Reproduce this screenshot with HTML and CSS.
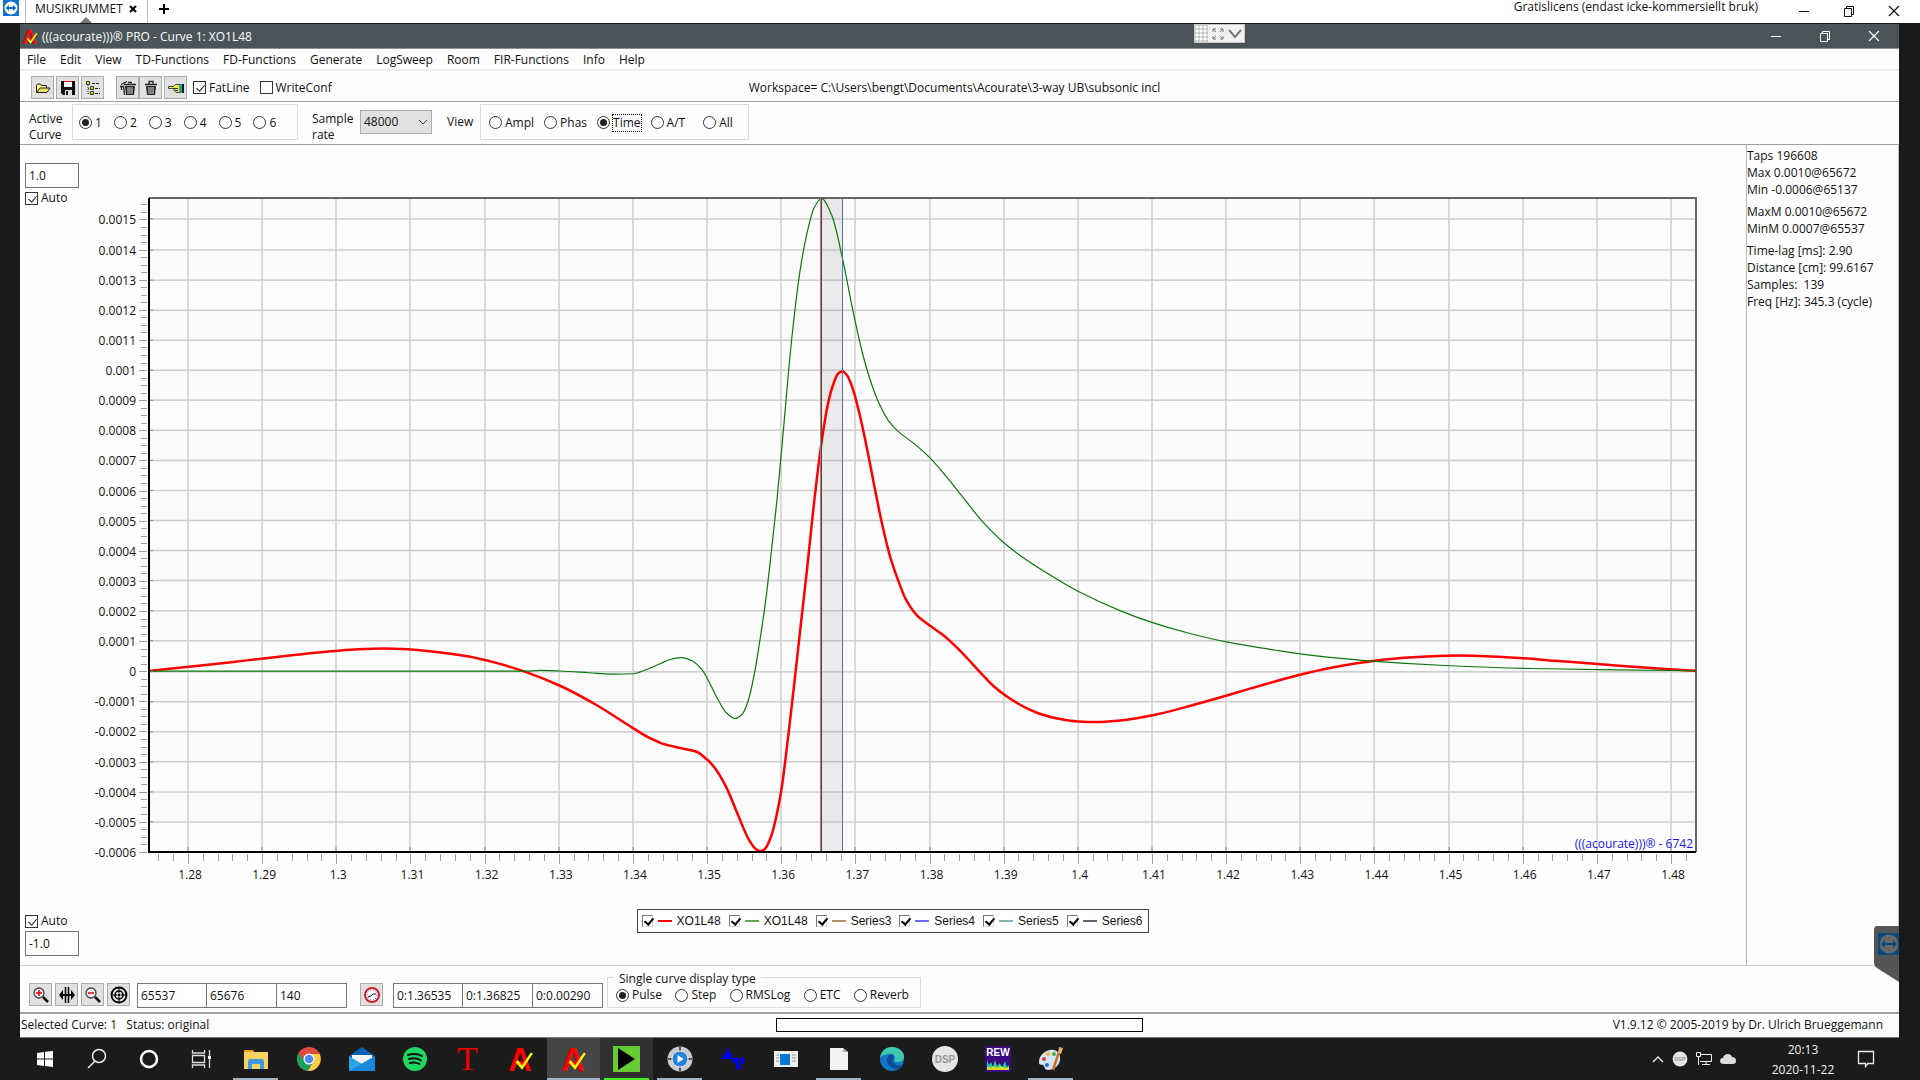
FILE: index.html
```html
<!DOCTYPE html>
<html lang="en">
  <head>
    <meta charset="UTF-8" />
    <title>(((acourate)))® PRO</title>
    <link rel="stylesheet" href="styles.css">
  </head>
  <body>
    <svg class="defs" aria-hidden="true">
      <symbol id="acourate" viewBox="0 0 24 24">
        <text x="11" y="23" text-anchor="middle" class="logo-a">A</text>
        <path d="M9 13l4 5L21 6l2 1L13 22 7 15z" fill="#ff0" />
      </symbol>
      <symbol id="teamviewer" viewBox="0 0 16 16">
        <path fill="#0e74d0" d="M0 0h16v16H0z" />
        <circle cx="8" cy="8" r="6.5" fill="#fff" />
        <path fill="#0e74d0" d="M2.5 8L6 5v2h4V5l3.5 3-3.5 3V9H6v2z" />
      </symbol>
      <symbol id="restore" viewBox="0 0 12 12">
        <path d="M1.500 3.500h7v8h-7zM3.500 3V1.500h7v8H9" fill="none" stroke="currentColor" />
      </symbol>
      <symbol id="close" viewBox="0 0 12 12">
        <path d="M1 1l10 10M11 1L1 11" fill="none" stroke="currentColor" stroke-width="1.2" />
      </symbol>
      <symbol id="minimize" viewBox="0 0 12 12">
        <path d="M1 6.5h10" stroke="currentColor" />
      </symbol>
      <symbol id="dsp" viewBox="0 0 28 28">
        <circle cx="14" cy="14" r="13" fill="#e6e6e6" />
        <text x="14" y="18" text-anchor="middle" class="logo-dsp">DSP</text>
      </symbol>
    </svg>

    <header class="remote-bar">
      <svg class="remote-logo" width="16" height="16"><use href="#teamviewer" /></svg>
      <div class="remote-tab">
        MUSIKRUMMET
        <button class="tab-close" aria-label="Close tab">
          <svg width="8" height="8" viewBox="0 0 8 8"><path d="M1 1l6 6M7 1L1 7" stroke="#000" stroke-width="2" /></svg>
        </button>
      </div>
      <button class="tab-add" aria-label="New tab">
        <svg width="12" height="12" viewBox="0 0 12 12"><path d="M6 1v10M1 6h10" stroke="#000" stroke-width="2" /></svg>
      </button>
      <span class="licence">Gratislicens (endast icke-kommersiellt bruk)</span>
      <div class="remote-controls">
        <button aria-label="Minimize"><svg width="12" height="12"><use href="#minimize" /></svg></button>
        <button aria-label="Restore"><svg width="12" height="12"><use href="#restore" /></svg></button>
        <button aria-label="Close"><svg width="12" height="12"><use href="#close" /></svg></button>
      </div>
    </header>

    <div class="desktop">
      <main class="window">
        <div class="title-bar">
          <svg width="16" height="16"><use href="#acourate" /></svg>
          <h1>(((acourate)))® PRO - Curve 1: XO1L48</h1>
          <div class="window-controls">
            <button aria-label="Minimize"><svg width="12" height="12"><use href="#minimize" /></svg></button>
            <button aria-label="Restore"><svg width="12" height="12"><use href="#restore" /></svg></button>
            <button aria-label="Close"><svg width="12" height="12"><use href="#close" /></svg></button>
          </div>
          <div class="session-handle">
            <span class="grip"></span>
            <svg width="12" height="12" viewBox="0 0 12 12"><path d="M1 4V1h3M8 1h3v3M11 8v3H8M4 11H1V8M1 1l3 3M11 1L8 4M11 11L8 8M1 11l3-3" fill="none" stroke="#777" /></svg>
            <svg width="16" height="12" viewBox="0 0 16 12"><path d="M2 2l6 7 6-7" fill="none" stroke="#777" stroke-width="2" /></svg>
          </div>
        </div>

        <nav class="menu">
          <a href="#">File</a>
          <a href="#">Edit</a>
          <a href="#">View</a>
          <a href="#">TD-Functions</a>
          <a href="#">FD-Functions</a>
          <a href="#">Generate</a>
          <a href="#">LogSweep</a>
          <a href="#">Room</a>
          <a href="#">FIR-Functions</a>
          <a href="#">Info</a>
          <a href="#">Help</a>
        </nav>

        <div class="toolbar">
          <button class="tool" aria-label="Open">
            <svg width="16" height="16" viewBox="0 0 16 16"><path d="M1.500 12V5.500l1-1.500h3l1 1.500h5V8" fill="#f6f08a" stroke="#222" /><path d="M1.500 12.500L5 8h10l-3 4.500z" fill="#e8e060" stroke="#222" /></svg>
          </button>
          <button class="tool" aria-label="Save">
            <svg width="16" height="16" viewBox="0 0 16 16"><path d="M1 1h14v14H3l-2-2z" fill="#111" /><path d="M4 1h8v6H4z" fill="#fff" /><path d="M4 1h8v1H4z" fill="#e00" /><path d="M5 10h7v5H5z" fill="#ddd" /><path d="M6 11h2v4H6z" fill="#111" /></svg>
          </button>
          <button class="tool" aria-label="Tree">
            <svg width="16" height="16" viewBox="0 0 16 16"><path d="M3 3v11M3 8.500h4M3 13.500h4" fill="none" stroke="#333" stroke-dasharray="1 1" /><path d="M7 3.500h7M10 8.500h5M10 13.500h5" stroke="#222" stroke-dasharray="3 1" /><path d="M1.500 1.500h3v3h-3zM5.500 6.500h3v3h-3zM5.500 11.500h3v3h-3z" fill="#e8e000" stroke="#333" /></svg>
          </button>
          <span class="tool-gap"></span>
          <button class="tool joined" aria-label="Clear all">
            <svg width="16" height="16" viewBox="0 0 16 16"><path d="M5 6h10l-1 9H6z" fill="#222" /><path d="M8 7v7M10 7v7M12 7v7" stroke="#ddd" /><path d="M4 4.500h12M8 2.500h4M1 4.500l6-3M1.500 7v3M3.500 6l1 9M0 6.500h4" fill="none" stroke="#222" stroke-width="1.3" /></svg>
          </button>
          <button class="tool" aria-label="Clear">
            <svg width="16" height="16" viewBox="0 0 16 16"><path d="M3 6h10l-1 9H4z" fill="#222" /><path d="M6 7v7M8 7v7M10 7v7" stroke="#ddd" /><path d="M2 4.500h12M6 4V1.500h4V4" fill="none" stroke="#222" stroke-width="1.3" /></svg>
          </button>
          <button class="tool" aria-label="Undo">
            <svg width="16" height="16" viewBox="0 0 16 16"><path d="M.5 6.500h5l2-2H12v8H8l-2-2V8.500H.5z" fill="#ece850" stroke="#444" /><path d="M12 4h2v9h-2z" fill="#0aa" /><path d="M14 4h2v9h-2z" fill="#111" /><path d="M6 8.500h4M7 10.500h3" stroke="#333" /></svg>
          </button>
          <label class="check"><input type="checkbox" checked />FatLine</label>
          <label class="check"><input type="checkbox" />WriteConf</label>
          <span class="workspace">Workspace= C:\Users\bengt\Documents\Acourate\3-way UB\subsonic incl</span>
        </div>

        <div class="options">
          <span class="caption curve-caption">Active Curve</span>
          <div class="group curve-group">
            <label class="radio"><input type="radio" name="curve" checked />1</label>
            <label class="radio"><input type="radio" name="curve" />2</label>
            <label class="radio"><input type="radio" name="curve" />3</label>
            <label class="radio"><input type="radio" name="curve" />4</label>
            <label class="radio"><input type="radio" name="curve" />5</label>
            <label class="radio"><input type="radio" name="curve" />6</label>
          </div>
          <label class="caption rate-caption" for="rate">Sample rate</label>
          <div class="select">
            <select id="rate"><option>48000</option></select>
            <svg width="10" height="6" viewBox="0 0 10 6"><path d="M1 1l4 4 4-4" fill="none" stroke="#444" /></svg>
          </div>
          <span class="view-caption">View</span>
          <div class="group view-group">
            <label class="radio"><input type="radio" name="view" />Ampl</label>
            <label class="radio"><input type="radio" name="view" />Phas</label>
            <label class="radio"><input type="radio" name="view" checked /><span class="focused">Time</span></label>
            <label class="radio"><input type="radio" name="view" />A/T</label>
            <label class="radio all"><input type="radio" name="view" />All</label>
          </div>
        </div>

        <div class="content">
          <section class="chart">
            <div class="limits">
              <div>
                <input class="field" type="text" value="1.0" aria-label="Upper limit" />
                <label class="check"><input type="checkbox" checked />Auto</label>
              </div>
              <div>
                <label class="check"><input type="checkbox" checked />Auto</label>
                <input class="field" type="text" value="-1.0" aria-label="Lower limit" />
              </div>
            </div>
            <div class="y-axis" id="yAxis"></div>
            <div class="plot">
              <svg id="plot" viewBox="149 199 1547 653" preserveAspectRatio="none"></svg>
              <span class="watermark">(((acourate)))® - 6742</span>
            </div>
            <div class="x-axis" id="xAxis"></div>
            <div class="legend">
              <label><input type="checkbox" checked /><i class="line red"></i>XO1L48</label>
              <label><input type="checkbox" checked /><i class="line green"></i>XO1L48</label>
              <label><input type="checkbox" checked /><i class="line brown"></i>Series3</label>
              <label><input type="checkbox" checked /><i class="line blue"></i>Series4</label>
              <label><input type="checkbox" checked /><i class="line teal"></i>Series5</label>
              <label><input type="checkbox" checked /><i class="line dark"></i>Series6</label>
            </div>
          </section>

          <aside class="info">
            <p>Taps 196608<br />Max 0.0010@65672<br />Min -0.0006@65137</p>
            <p>MaxM 0.0010@65672<br />MinM 0.0007@65537</p>
            <p>Time-lag [ms]: 2.90<br />Distance [cm]: 99.6167<br />Samples:&nbsp; 139<br />Freq [Hz]: 345.3 (cycle)</p>
          </aside>
        </div>

        <div class="bottom-bar">
          <button class="tool" aria-label="Zoom in">
            <svg width="18" height="18" viewBox="0 0 18 18"><circle cx="7" cy="7" r="5" fill="#eee" stroke="#444" stroke-width="1.3" /><path d="M11 11l5 5" stroke="#111" stroke-width="2.500" /><path d="M7 4v6M4 7h6" stroke="#e00" stroke-width="1.5" /></svg>
          </button>
          <button class="tool" aria-label="Fit width">
            <svg width="18" height="18" viewBox="0 0 18 18"><path d="M7.500 1v16M10.500 1v16" stroke="#000" stroke-width="1.5" /><path d="M1 9l4-5v10zM17 9l-4-5v10z" /><path d="M5 9h8" stroke="#000" stroke-width="2" /></svg>
          </button>
          <button class="tool" aria-label="Zoom out">
            <svg width="18" height="18" viewBox="0 0 18 18"><circle cx="7" cy="7" r="5" fill="#eee" stroke="#444" stroke-width="1.3" /><path d="M11 11l5 5" stroke="#111" stroke-width="2.500" /><path d="M4 7h6" stroke="#e00" stroke-width="1.5" /></svg>
          </button>
          <button class="tool" aria-label="Centre">
            <svg width="18" height="18" viewBox="0 0 18 18"><g fill="none" stroke="#000"><circle cx="9" cy="9" r="7.5" stroke-width="1.8" /><circle cx="9" cy="9" r="4" stroke-width="1.5" /><path d="M9 2v5M9 11v5M2 9h5M11 9h5" /></g><circle cx="9" cy="9" r="1.5" /></svg>
          </button>
          <div class="fields">
            <input class="field" type="text" value="65537" aria-label="First sample" />
            <input class="field" type="text" value="65676" aria-label="Last sample" />
            <input class="field" type="text" value="140" aria-label="Sample count" />
          </div>
          <button class="tool" aria-label="Time">
            <svg width="18" height="18" viewBox="0 0 18 18"><circle cx="9" cy="9" r="7" fill="#fff" stroke="#c22" stroke-width="2" /><circle cx="9" cy="9" r="5" fill="none" stroke="#44f" stroke-dasharray="1 2" /><path d="M5 11l3-1 2-2h3" fill="none" stroke="#111" /></svg>
          </button>
          <div class="fields">
            <input class="field" type="text" value="0:1.36535" aria-label="Start time" />
            <input class="field" type="text" value="0:1.36825" aria-label="End time" />
            <input class="field" type="text" value="0:0.00290" aria-label="Duration" />
          </div>
          <fieldset class="display-type">
            <legend>Single curve display type</legend>
            <label class="radio"><input type="radio" name="type" checked />Pulse</label>
            <label class="radio"><input type="radio" name="type" />Step</label>
            <label class="radio"><input type="radio" name="type" />RMSLog</label>
            <label class="radio"><input type="radio" name="type" />ETC</label>
            <label class="radio"><input type="radio" name="type" />Reverb</label>
          </fieldset>
        </div>

        <footer class="status">
          <span>Selected Curve: 1&nbsp;&nbsp; Status: original</span>
          <div class="progress"></div>
          <span class="version">V1.9.12 © 2005-2019 by Dr. Ulrich Brueggemann</span>
        </footer>

        <svg class="side-flap" width="25" height="56" viewBox="0 0 25 56">
          <path d="M3 0h22v56L3 42q-3-2-3-5V4q0-4 3-4z" fill="#555" />
          <path d="M4 7h21v22H4z" fill="#07497f" />
          <circle cx="15" cy="18" r="9.5" fill="#666" />
          <path d="M7 18l4-4v3h8v-3l4 4-4 4v-3h-8v3z" fill="#07497f" />
        </svg>
      </main>
    </div>

    <div class="taskbar">
      <div class="system">
        <button aria-label="Start"><svg width="16" height="18" viewBox="0 0 16 18"><path fill="#fff" d="M0 3l7-1v6.500H0zM8 1.800L16 1v7.500H8zM0 9.500h7V16l-7-1zM8 9.500h8V17l-8-1z" /></svg></button>
        <button aria-label="Search"><svg width="22" height="22" viewBox="0 0 22 22"><circle cx="13" cy="8" r="6.5" fill="none" stroke="#eee" stroke-width="1.5" /><path d="M9 13l-7 7" stroke="#eee" stroke-width="1.5" /></svg></button>
        <button aria-label="Cortana"><svg width="20" height="20" viewBox="0 0 20 20"><circle cx="10" cy="10" r="8" fill="none" stroke="#fff" stroke-width="2.5" /></svg></button>
        <button aria-label="Task view"><svg width="22" height="20" viewBox="0 0 22 20"><path d="M2.500 1v3h12V1M2.500 6.500h12v7h-12zM2.500 19v-3h12v3M19.500 1v18" fill="none" stroke="#ddd" stroke-width="1.3" /><path d="M18 7h3v3h-3z" fill="#fff" /></svg></button>
      </div>
      <div class="apps">
        <button class="running" aria-label="Explorer">
          <svg width="26" height="24" viewBox="0 0 26 24"><path d="M1 3h9l2 3H1z" fill="#e0a31b" /><path d="M1 5h24v17H1z" fill="#fbd162" /><path d="M5 22v-7q0-3 3-3h10q3 0 3 3v7h-4v-5H9v5z" fill="#3c9be0" /></svg>
        </button>
        <button aria-label="Chrome">
          <svg width="26" height="26" viewBox="0 0 26 26"><circle cx="13" cy="13" r="12" fill="#dd4b3e" /><path d="M2.600 7A12 12 0 0 0 12 25l5-9-8-1z" fill="#1da05d" /><path d="M12 25A12 12 0 0 0 23.500 8H13l5 7z" fill="#ffce44" /><circle cx="13" cy="13" r="5.5" fill="#fff" /><circle cx="13" cy="13" r="4.3" fill="#4a8bf5" /></svg>
        </button>
        <button aria-label="Mail">
          <svg width="28" height="26" viewBox="0 0 28 26"><path d="M1 10L14 1l13 9v14H1z" fill="#0a64b4" /><path d="M4 9h20v10H4z" fill="#f4f4f4" /><path d="M1 10l13 8 13-8v15H1z" fill="#28a8ea" /><path d="M1 25L27 10v15z" fill="#1688dd" /></svg>
        </button>
        <button aria-label="Spotify">
          <svg width="26" height="26" viewBox="0 0 26 26"><circle cx="13" cy="13" r="12" fill="#1ed760" /><path d="M6 9q8-2.500 14 1M7 13q7-2 12 1.500M8 17q5-1.500 9.500 1" fill="none" stroke="#111" stroke-width="2" stroke-linecap="round" /></svg>
        </button>
        <button class="t-logo" aria-label="T">T</button>
        <button aria-label="Acourate"><svg width="26" height="26"><use href="#acourate" /></svg></button>
        <button class="running active" aria-label="Acourate"><svg width="26" height="26"><use href="#acourate" /></svg></button>
        <button class="running player" aria-label="JRiver">
          <svg width="27" height="26" viewBox="0 0 27 26"><path d="M0 0h27v26H0z" fill="#6c3" /><path d="M5 2l17 11L5 24z" /></svg>
        </button>
        <button class="running" aria-label="Media player">
          <svg width="26" height="26" viewBox="0 0 26 26"><circle cx="13" cy="13" r="12.5" fill="#c8ccd0" /><path d="M13 1v4M13 21v4M1 13h4M21 13h4" stroke="#555" stroke-width="2" /><circle cx="13" cy="13" r="8" fill="#2582d8" stroke="#eee" /><path d="M10.500 9l6 4-6 4z" fill="#fff" /></svg>
        </button>
        <button aria-label="Wave">
          <svg width="24" height="24" viewBox="0 0 24 24"><path d="M1 8h2v3H1zM4 5h2v6H4zM6 1h2v10H6zM8 6h3v5H8zM0 11h24v1H0zM12 12h3v4h-3zM15 12h2v10h-2zM18 12h2v11h-2zM21 12h2v5h-2z" fill="#00f" /></svg>
        </button>
        <button aria-label="Remote app">
          <svg width="24" height="18" viewBox="0 0 24 18"><path d="M0 1h24v16H0z" fill="#eee" /><path d="M6 4h10v11H6z" fill="#0a78d6" /><path d="M2 5h3M2 8h3M2 11h3M18 5h4M18 8h4M18 11h4" stroke="#999" /></svg>
        </button>
        <button class="running" aria-label="Document">
          <svg width="18" height="24" viewBox="0 0 18 24"><path d="M0 1h13l5 4v18H0z" fill="#f2f2f2" /><path d="M13 1v4h5z" fill="#aaa" /></svg>
        </button>
        <button aria-label="Edge">
          <svg width="26" height="26" viewBox="0 0 26 26"><circle cx="13" cy="13" r="12" fill="#1478c8" /><path d="M1 12C2 4 8 1 13 1c8 0 13 6 12 11-1 4-7 5-10 3 3-4-1-8-5-7-4 0-8 2-9 4z" fill="#3cc8b0" /><path d="M10 9c-4 4-2 13 7 14 3 0 6-2 7-4-4 1-9 1-10-5 0-2 1-3 1-4-1-2-4-2-5-1z" fill="#0c4c98" /></svg>
        </button>
        <button aria-label="DSP"><svg width="28" height="28"><use href="#dsp" /></svg></button>
        <button aria-label="REW">
          <svg width="26" height="26" viewBox="0 0 26 26"><path d="M0 0h26v26H0z" fill="#3a0a80" /><text x="13" y="10" text-anchor="middle" class="logo-rew">REW</text><path d="M2 24V14l2 5 2-3 2 5 2-7 2 6 3-3 2 5 3-7 2 6 2-2v5z" fill="#2c9" /><path d="M2 24v-4l3 2 4-2 3 2 4-2 4 2 4-1v3z" fill="#dd2" /></svg>
        </button>
        <button class="running" aria-label="Paint">
          <svg width="26" height="26" viewBox="0 0 26 26"><path d="M12 4c7-1 11 4 10 10s-6 10-12 10c-4 0-3-4-5-5s-4 1-4-3C1 10 6 5 12 4z" fill="#d4e6f4" /><circle cx="6" cy="13" r="2" fill="#e33" /><circle cx="10" cy="8" r="2" fill="#fa2" /><circle cx="16" cy="8" r="2" fill="#3b4" /><circle cx="9" cy="19" r="2" fill="#36d" /><path d="M15 24l6-18" stroke="#c6702a" stroke-width="2.5" /><path d="M20 7l1-6 4 1-2 6z" fill="#e8b070" /></svg>
        </button>
      </div>
      <div class="tray">
        <svg width="12" height="8" viewBox="0 0 12 8"><path d="M1 7l5-5 5 5" fill="none" stroke="#eee" stroke-width="1.3" /></svg>
        <svg width="16" height="16"><use href="#dsp" /></svg>
        <svg width="16" height="14" viewBox="0 0 16 14"><path d="M4 2.500h11.500v7H4M10 9.500v3M6 12.500h8M2.500 5v8" fill="none" stroke="#eee" /><path d="M.5.5h4v4h-4z" fill="#1b1b1b" stroke="#eee" /></svg>
        <svg width="16" height="12" viewBox="0 0 16 12"><path d="M4 11q-4 0-4-3t3-3q1-4 5-4 3 0 4 3 4 0 4 4 0 3-3 3z" fill="#ddd" /></svg>
      </div>
      <div class="clock">20:13<br />2020-11-22</div>
      <button class="notifications" aria-label="Notifications">
        <svg width="18" height="18" viewBox="0 0 18 18"><path d="M1.500 1.500h15v12H11l-2.500 3v-3h-7z" fill="none" stroke="#eee" stroke-width="1.3" /></svg>
      </button>
    </div>

    <script src="chart.js"></script>
  </body>
</html>
```
FILE: styles.css
```css
:root {
  --dark: #1a1a1a;
  --title: #4a5459;
  --page: #fdfdfd;
  --rule: #a0a0a0;
  --rule-light: #cccccc;
  --group: #dcdcdc;
  --button: #e1e1e1;
  --button-border: #adadad;
  --text: #111111;
}

* {
  margin: 0;
  padding: 0;
  box-sizing: border-box;
}

body {
  font-family: "Open Sans", "Noto Sans", sans-serif;
  font-size: 12px;
  line-height: 16px;
  color: var(--text);
  background: var(--dark);
  height: 100vh;
  display: flex;
  flex-direction: column;
  overflow: hidden;
}

button,
input,
select {
  font: inherit;
  color: inherit;
}

button {
  border: none;
  background: none;
}

svg {
  display: block;
  flex-shrink: 0;
}

.defs {
  display: none;
}

.logo-a {
  font: bold 30px "Liberation Sans", sans-serif;
  fill: #ff0000;
}

.logo-dsp {
  font: bold 10px "Liberation Sans", sans-serif;
  fill: #999999;
}

.logo-rew {
  font: bold 10px "Liberation Sans", sans-serif;
  fill: #ffffff;
}

/* Remote session bar */
.remote-bar {
  display: flex;
  height: 23px;
  background: #ffffff;
  padding-left: 3px;
}

.remote-tab {
  position: relative;
  display: flex;
  align-items: center;
  justify-content: space-between;
  width: 123px;
  margin-left: 6px;
  padding: 0 10px 5px 9px;
  border-left: 1px solid #bbbbbb;
  border-right: 1px solid #bbbbbb;
}

.remote-tab::after {
  content: "";
  position: absolute;
  left: 54px;
  bottom: 0;
  border: 6px solid transparent;
  border-top: none;
  border-bottom-color: #777777;
}

.tab-add {
  margin: 0 0 6px 10px;
}

.licence {
  margin-left: auto;
  line-height: 14px;
}

.remote-controls,
.window-controls {
  display: flex;
  align-items: center;
}

.remote-controls {
  gap: 33px;
  padding: 0 20px 2px 40px;
}

/* Application window */
.desktop {
  flex: 1;
  display: flex;
  min-height: 0;
  padding: 1px 21px 0 20px;
}

.window {
  position: relative;
  flex: 1;
  display: flex;
  flex-direction: column;
  min-width: 0;
  background: var(--page);
  border-bottom: 1px solid #777777;
}

.title-bar {
  position: relative;
  display: flex;
  align-items: center;
  gap: 4px;
  height: 25px;
  padding: 1px 0 0 2px;
  background: var(--title);
  border-bottom: 1px solid #8a9093;
  color: #ffffff;
}

.title-bar h1 {
  font-size: 12px;
  font-weight: 400;
}

.window-controls {
  gap: 37px;
  margin-left: auto;
  padding: 0 19px 2px 0;
}

.session-handle {
  position: absolute;
  left: 62.5%;
  top: 0;
  display: flex;
  align-items: center;
  gap: 4px;
  width: 51px;
  height: 19px;
  background: #f2f2f2;
  border: 1px solid #c8c8c8;
}

.session-handle svg + svg {
  margin-left: -1px;
}

.grip {
  width: 13px;
  height: 17px;
  background: radial-gradient(#ffffff 1px, #c4c4c4 2px) 0 0 / 4px 4px;
}

.menu {
  display: flex;
  align-items: center;
  gap: 14px;
  height: 22px;
  padding: 2px 0 0 7px;
  border-bottom: 2px solid #eeeeee;
}

.menu a {
  color: inherit;
  text-decoration: none;
}

.toolbar {
  display: flex;
  align-items: center;
  gap: 2px;
  height: 31px;
  padding: 3px 0 0 11px;
  border-bottom: 1px solid var(--rule);
}

.tool {
  display: flex;
  align-items: center;
  justify-content: center;
  width: 23px;
  height: 23px;
  background: var(--button);
  border: 1px solid var(--button-border);
}

.tool.joined {
  margin-right: -2px;
}

.tool-gap {
  width: 8px;
}

.check,
.radio {
  display: flex;
  align-items: center;
  gap: 3px;
  white-space: nowrap;
}

.toolbar .check {
  margin: 0 4px;
}

.workspace {
  margin-left: 22%;
}

input[type="checkbox"],
input[type="radio"] {
  appearance: none;
  position: relative;
  flex-shrink: 0;
  width: 13px;
  height: 13px;
  border: 1px solid #333333;
  background: #ffffff;
}

input[type="radio"] {
  border-radius: 50%;
}

input[type="checkbox"]:checked::after {
  content: "";
  position: absolute;
  left: 4px;
  top: 1px;
  width: 4px;
  height: 7px;
  border: solid #222222;
  border-width: 0 1px 1px 0;
  transform: rotate(40deg);
}

input[type="radio"]:checked::after {
  content: "";
  position: absolute;
  inset: 2px;
  border-radius: 50%;
  background: #222222;
}

.options {
  display: flex;
  align-items: flex-start;
  height: 43px;
  padding: 2px 0 0 9px;
  border-bottom: 1px solid var(--rule);
}

.caption {
  padding-top: 7px;
}

.curve-caption {
  width: 43px;
}

.rate-caption {
  width: 48px;
  margin-left: 14px;
}

.group {
  display: flex;
  align-items: center;
  height: 36px;
  padding-top: 1px;
  border: 1px solid var(--group);
}

.curve-group {
  width: 226px;
  gap: 12px;
  padding-left: 6px;
}

.view-group {
  width: 269px;
  gap: 10px;
  padding-left: 8px;
}

.view-group .all {
  margin-left: 8px;
}

.focused {
  outline: 1px dotted #000000;
}

.select {
  position: relative;
  margin-top: 6px;
}

.select select {
  appearance: none;
  width: 72px;
  height: 24px;
  padding-left: 3px;
  background: var(--button);
  border: 1px solid var(--button-border);
  border-radius: 0;
}

.select svg {
  position: absolute;
  right: 4px;
  top: 9px;
}

.view-caption {
  width: 33px;
  margin-left: 15px;
  padding-top: 10px;
}

/* Chart */
.content {
  flex: 1;
  display: flex;
  min-height: 0;
}

.chart {
  flex: 1;
  display: grid;
  grid-template-columns: 65px 64px 1fr;
  grid-template-rows: 1fr 57px 56px;
  padding: 53px 50px 0 0;
}

.limits {
  grid-area: 1 / 1 / 4 / 2;
  display: flex;
  flex-direction: column;
  justify-content: space-between;
  margin-top: -35px;
  padding: 0 5px 9px 5px;
}

.limits .check {
  height: 20px;
}

.field {
  display: block;
  height: 25px;
  padding: 0 3px;
  background: #ffffff;
  border: 1px solid #777777;
}

.limits .field {
  width: 54px;
}

.y-axis,
.x-axis,
.plot {
  position: relative;
}

.y-axis {
  grid-area: 1 / 2;
}

.plot {
  grid-area: 1 / 3;
}

.x-axis {
  grid-area: 2 / 3;
}

.y-axis span {
  position: absolute;
  right: 13px;
  transform: translateY(-7px);
}

.x-axis span {
  position: absolute;
  top: 15px;
  margin-left: 2px;
  transform: translateX(-50%);
}

.y-axis i,
.x-axis i {
  position: absolute;
  background: #a0a0a0;
}

.y-axis i {
  right: 2px;
  width: 6px;
  height: 1px;
}

.x-axis i {
  top: 2px;
  width: 1px;
  height: 7px;
}

.y-axis i.major {
  width: 8px;
}

.x-axis i.major {
  height: 10px;
}

#plot {
  position: absolute;
  width: 100%;
  height: 100%;
  overflow: visible;
}

#plot * {
  vector-effect: non-scaling-stroke;
}

.band {
  fill: #fafafa;
}

.grid {
  fill: none;
  stroke: #cecece;
  stroke-width: 1.5px;
}

.selection {
  fill: #777777;
  fill-opacity: 0.13;
}

.curve {
  fill: none;
  stroke-linejoin: round;
}

.curve-1 {
  stroke: #ff0000;
  stroke-width: 2.5px;
}

.curve-2 {
  stroke: #0a780a;
  stroke-width: 1.2px;
}

.frame {
  fill: none;
  stroke: #666666;
  stroke-width: 2px;
}

.axes {
  fill: none;
  stroke: #000000;
  stroke-width: 2px;
}

.cursor {
  stroke-width: 1px;
}

.watermark {
  position: absolute;
  right: 3px;
  bottom: 0;
  color: #1414f0;
}

.legend {
  grid-area: 3 / 1 / 4 / 4;
  justify-self: center;
  display: flex;
  align-items: center;
  gap: 8px;
  height: 24px;
  margin-left: 70px;
  padding: 0 6px 0 4px;
  border: 1px solid #444444;
  background: #ffffff;
  font-family: "Liberation Sans", sans-serif;
}

.legend label {
  display: flex;
  align-items: center;
}

.legend input[type="checkbox"] {
  width: 11px;
  height: 12px;
  border-color: #777777 #dddddd #dddddd #777777;
}

.legend input[type="checkbox"]:checked::after {
  left: 3px;
  top: 0;
  border-color: #000000;
  border-width: 0 2px 2px 0;
}

.line {
  width: 14px;
  height: 2px;
  margin: 0 5px;
}

.line.red {
  background: #ff0000;
}

.line.green {
  background: #5cab5c;
}

.line.brown {
  background: #b8906a;
}

.line.blue {
  background: #6a6aff;
}

.line.teal {
  background: #84b4b4;
}

.line.dark {
  background: #666666;
}

.info {
  width: 153px;
  border-left: 1px solid #bbbbbb;
  border-right: 1px solid #bbbbbb;
  padding-top: 2px;
  line-height: 17px;
  white-space: nowrap;
}

.info p {
  margin-bottom: 5px;
}

/* Bottom bars */
.bottom-bar {
  display: flex;
  align-items: flex-start;
  gap: 3px;
  height: 49px;
  padding: 17px 0 0 9px;
  border-top: 1px solid var(--rule-light);
  border-bottom: 2px solid var(--rule);
}

.fields {
  display: flex;
  margin: 0 10px 0 4px;
}

.fields .field {
  width: 70px;
}

.fields .field + .field {
  border-left: none;
}

.fields + .tool + .fields {
  margin: 0 1px 0 7px;
}

.display-type {
  display: flex;
  align-items: center;
  justify-content: space-between;
  position: relative;
  width: 314px;
  height: 31px;
  margin-top: -6px;
  padding: 5px 11px 0 8px;
  border: 1px solid var(--group);
}

.display-type legend {
  position: absolute;
  left: 6px;
  top: -7px;
  padding: 0 5px;
  background: var(--page);
}

.status {
  display: grid;
  grid-template-columns: 1fr 367px 1fr;
  align-items: center;
  height: 23px;
  padding: 0 1px 1px;
}

.progress {
  height: 14px;
  background: #ffffff;
  border: 1px solid #000000;
}

.version {
  padding-right: 15px;
  text-align: right;
}

.side-flap {
  position: absolute;
  right: 0;
  bottom: 55px;
}

/* Taskbar */
.taskbar {
  display: flex;
  height: 42px;
  padding-left: 19px;
  background: #1b1b1b;
  color: #f2f2f2;
}

.system,
.apps {
  display: flex;
}

.apps {
  margin-left: 2px;
}

.taskbar button {
  display: flex;
  align-items: center;
  justify-content: center;
  width: 52px;
}

.apps button {
  position: relative;
  width: 53px;
}

.apps .active {
  background: #454545;
}

.apps .player {
  background: #303030;
}

.apps .running::after {
  content: "";
  position: absolute;
  left: 4px;
  right: 4px;
  bottom: 0;
  height: 2px;
  background: #9fb4c4;
}

.apps .active::after {
  left: 0;
  right: 0;
}

.apps .player::after {
  background: #44ee22;
}

.taskbar .t-logo {
  color: #ee0000;
  font: 34px/34px "Liberation Serif", serif;
}

.tray {
  display: flex;
  align-items: center;
  gap: 8px;
  margin-left: auto;
}

.clock {
  width: 80px;
  margin: 2px 0 0 27px;
  line-height: 20px;
  text-align: center;
}

.taskbar .notifications {
  width: 45px;
  margin-right: 32px;
}
```
FILE: chart.js
```js
// Plot area, in viewBox units
const VIEW = { x: 149, y: 199, w: 1547, h: 653 };
const X0 = 188; // 1.28 s
const X_STEP = 74.15; // 0.01 s
const Y0 = 671.5; // amplitude 0
const Y_STEP = 30.07; // 0.0001

const pulse = [
  [149, 671.3], [196, 666.3], [229, 662.7], [261, 659], [294, 655.3], [326, 652],
  [355, 649.7], [384, 648.8], [410, 649.7], [437, 652.3], [469, 656.9], [498, 663.7],
  [524, 671.7], [560, 686], [596, 705], [633, 728.3], [648, 737.3], [664, 744.3],
  [681, 748.3], [696, 751.7], [707, 759.7], [715, 768.3], [726, 786.7], [738, 815],
  [749, 840], [756, 849.3], [760.7, 851.3], [765.4, 848.3], [771.4, 835.5], [776, 818],
  [781.4, 790], [788.6, 733.3], [795.7, 671], [801, 623.3], [807, 570], [813, 513],
  [820, 454], [824, 426.7], [828.5, 402], [834, 383], [838, 374.5], [842.3, 372],
  [847, 376], [853, 390], [860, 416.7], [867, 449], [875, 490], [882, 524],
  [890, 556.7], [899, 583], [906, 600], [917, 615.7], [930, 626], [944, 636],
  [956, 647], [967, 658.3], [980, 672.3], [994, 686.7], [1008, 697.5], [1024, 707],
  [1042, 714.7], [1060, 719.3], [1078, 721.7], [1096, 722.3], [1120, 720.7], [1157, 714.5],
  [1194, 705], [1231, 694.5], [1267, 684], [1298, 675.5], [1335, 667.3], [1375, 661],
  [1408, 657.8], [1457, 655.8], [1506, 657.5], [1555, 661], [1616, 665.8], [1665, 669.3],
  [1696, 671]
];

const step = [
  [149, 671.5], [525, 671.5], [540, 670.7], [560, 671.3], [589, 673], [612, 674.4],
  [633, 674], [646, 670], [660, 664], [672, 659.3], [681.4, 658], [692, 661],
  [703, 671.3], [709, 682], [717, 698], [726, 712.7], [735, 718.7], [742, 714.7],
  [748, 701.7], [754.6, 673], [760, 640], [765.4, 603], [770.5, 560], [777, 500],
  [782.3, 443], [791.7, 340], [800, 272], [807, 234], [814, 209], [821.5, 199.5],
  [832, 217], [842, 257], [853, 312], [862, 352], [870, 380], [878, 401.7],
  [888, 420.7], [898, 432], [915, 445], [930, 458.5], [947, 478], [963, 498],
  [983, 522.7], [1003, 542.5], [1023, 558], [1046, 573], [1078, 591.7], [1120, 611],
  [1151, 622.5], [1188, 633.3], [1225, 642], [1274, 650.3], [1310, 655.5], [1375, 661.7],
  [1445, 665.8], [1531, 668.8], [1616, 670.2], [1696, 671]
];

// Monotone cubic through the points
function curvePath(pts) {
  const n = pts.length;
  const slope = [];
  for (let i = 0; i < n - 1; i++) {
    slope.push((pts[i + 1][1] - pts[i][1]) / (pts[i + 1][0] - pts[i][0]));
  }
  const m = pts.map((p, i) => {
    if (i === 0) return slope[0];
    if (i === n - 1) return slope[n - 2];
    if (slope[i - 1] * slope[i] <= 0) return 0;
    return (2 * slope[i - 1] * slope[i]) / (slope[i - 1] + slope[i]);
  });
  let d = `M${pts[0]}`;
  for (let i = 0; i < n - 1; i++) {
    const [x1, y1] = pts[i];
    const [x2, y2] = pts[i + 1];
    const h = (x2 - x1) / 3;
    d += `C${x1 + h} ${y1 + m[i] * h} ${x2 - h} ${y2 - m[i + 1] * h} ${x2} ${y2}`;
  }
  return d;
}

const left = VIEW.x;
const right = VIEW.x + VIEW.w;
const top_ = VIEW.y;
const bottom = VIEW.y + VIEW.h;
const yOf = (k) => Math.round(Y0 - k * Y_STEP);
const xOf = (k) => Math.round(X0 + k * X_STEP);

let bands = `<rect class="band" x="${left}" y="${top_}" width="${VIEW.w}" height="${yOf(15) - top_}"/>`;
for (let k = 14; k > -6; k -= 2) {
  bands += `<rect class="band" x="${left}" y="${yOf(k)}" width="${VIEW.w}" height="${yOf(k - 1) - yOf(k)}"/>`;
}

let grid = "";
let inner = "";
for (let k = 15; k >= -6; k--) {
  grid += `M${left} ${yOf(k)}H${right}`;
  inner += `M${left} ${yOf(k)}h4`;
}
for (let k = 0; k <= 20; k++) {
  grid += `M${xOf(k)} ${top_}V${bottom}`;
  inner += `M${xOf(k)} ${bottom}v-5`;
}

document.getElementById("plot").innerHTML = `
  ${bands}
  <path class="grid" d="${grid}"/>
  <rect class="selection" x="822" y="${top_}" width="20" height="${VIEW.h}"/>
  <path class="frame" d="M${left} ${top_}H${right}V${bottom}"/>
  <path class="curve curve-1" d="${curvePath(pulse)}"/>
  <path class="curve curve-2" d="${curvePath(step)}"/>
  <path class="cursor" stroke="#f06060" d="M820.5 ${top_}V${bottom}"/>
  <path class="cursor" stroke="#1a5c50" d="M821.5 ${top_}V${bottom}"/>
  <path class="cursor" stroke="#5070c0" d="M842.5 ${top_}V${bottom}"/>
  <path stroke="#888" d="${inner}"/>
  <path class="axes" d="M${left} ${top_}V${bottom}H${right}"/>`;

let yAxis = "";
for (let q = 62; q >= -24; q--) {
  const pos = ((Y0 - (q / 4) * Y_STEP - top_) / VIEW.h) * 100;
  const major = q % 4 === 0;
  yAxis += `<i class="${major ? "major" : ""}" style="top:${pos}%"></i>`;
  if (major) {
    yAxis += `<span style="top:${pos}%">${Number((q / 40000).toFixed(4))}</span>`;
  }
}
document.getElementById("yAxis").innerHTML = yAxis;

let xAxis = "";
for (let q = -2; q <= 101; q++) {
  const pos = ((X0 + (q / 5) * X_STEP - left) / VIEW.w) * 100;
  const major = q % 5 === 0;
  xAxis += `<i class="${major ? "major" : ""}" style="left:${pos}%"></i>`;
  if (major) {
    xAxis += `<span style="left:${pos}%">${Number((1.28 + q / 500).toFixed(2))}</span>`;
  }
}
document.getElementById("xAxis").innerHTML = xAxis;
```
